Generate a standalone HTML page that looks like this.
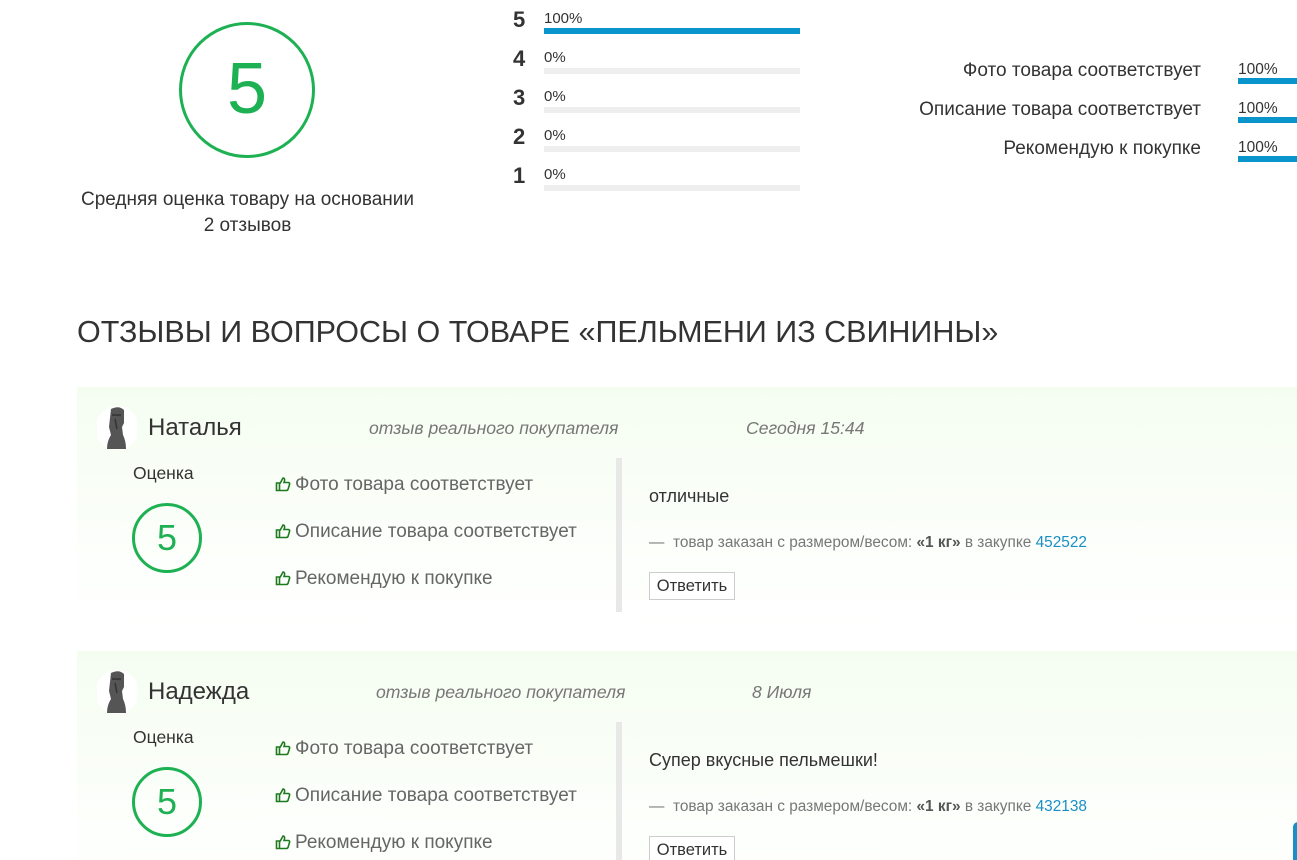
<!DOCTYPE html>
<html><head><meta charset="utf-8"><style>
*{margin:0;padding:0;box-sizing:border-box}
html,body{width:1297px;height:860px;overflow:hidden}
body{background:#fff;font-family:"Liberation Sans","DejaVu Sans",sans-serif;color:#333;position:relative}
.a{position:absolute;white-space:nowrap}
.circ{position:absolute;border:3px solid #1db153;border-radius:50%;color:#1db153;text-align:center}
.bar{position:absolute;left:544px;width:256px;height:6px;background:#eee}
.num{position:absolute;left:513px;font-weight:bold;font-size:22px;color:#333}
.pct{position:absolute;left:544px;font-size:15px;color:#333}
.lbl{position:absolute;right:96px;font-size:19px;color:#333;text-align:right}
.card{position:absolute;left:77px;width:1220px;height:240px;background:linear-gradient(#f5fdf1,#fdfffc 80%,#fff)}
.name{position:absolute;left:71px;font-size:24px;color:#333}
.it{position:absolute;font-style:italic;font-size:17.6px;color:#777}
.th{position:absolute;left:198px;font-size:19px;color:#666}
.th svg{vertical-align:-2px;margin-right:4px}
.sep{position:absolute;left:539px;top:71px;width:6px;height:154px;background:#e8e8e8}
.btn{position:absolute;left:572px;width:86px;height:28px;border:1px solid #ccc;background:#fff;font-size:16.5px;text-align:center;line-height:26px;color:#333}
.note{position:absolute;left:572px;font-size:15.4px;color:#777}
.note b{color:#555}
.note span{color:#1a8fc7}
</style></head><body>

<div class="circ" style="left:179px;top:22px;width:136px;height:136px;font-size:72px;line-height:128px">5</div>
<div class="a" style="left:0;width:495px;text-align:center;top:187px;font-size:19px;line-height:26px">Средняя оценка товару на основании<br>2 отзывов</div>

<div class="num" style="top:7px">5</div><div class="pct" style="top:10px">100%</div><div class="bar" style="top:28px;background:#0a94cc"></div>
<div class="num" style="top:46px">4</div><div class="pct" style="top:49px">0%</div><div class="bar" style="top:68px"></div>
<div class="num" style="top:85px">3</div><div class="pct" style="top:88px">0%</div><div class="bar" style="top:107px"></div>
<div class="num" style="top:124px">2</div><div class="pct" style="top:127px">0%</div><div class="bar" style="top:146px"></div>
<div class="num" style="top:163px">1</div><div class="pct" style="top:166px">0%</div><div class="bar" style="top:185px"></div>

<div class="lbl" style="top:60px">Фото товара соответствует</div>
<div class="lbl" style="top:99px">Описание товара соответствует</div>
<div class="lbl" style="top:138px">Рекомендую к покупке</div>
<div class="a" style="left:1238px;top:61px;font-size:15.5px">100%</div><div class="a" style="left:1238px;top:78px;width:59px;height:6px;background:#0a94cc"></div>
<div class="a" style="left:1238px;top:100px;font-size:15.5px">100%</div><div class="a" style="left:1238px;top:117px;width:59px;height:6px;background:#0a94cc"></div>
<div class="a" style="left:1238px;top:139px;font-size:15.5px">100%</div><div class="a" style="left:1238px;top:156px;width:59px;height:6px;background:#0a94cc"></div>

<div class="a" style="left:77px;top:315px;font-size:30.5px;color:#333">ОТЗЫВЫ И ВОПРОСЫ О ТОВАРЕ «ПЕЛЬМЕНИ ИЗ СВИНИНЫ»</div>

<!-- card 1 -->
<div class="card" style="top:387px">
  <svg class="a" style="left:20px;top:18px" width="40" height="46" viewBox="0 0 40 46"><circle cx="20" cy="23" r="22" fill="#fff"/><path d="M14 4 Q22 0 27 5 L27 18 L25 22 L26 30 Q29 36 29 44 L10 44 Q10 36 14 30 L12 22 Z" fill="#555"/><path d="M15 10 L24 10 M18 14 L20 24" stroke="#333" stroke-width="1.5"/></svg>
  <div class="name" style="top:27px">Наталья</div>
  <div class="it" style="left:292px;top:31px">отзыв реального покупателя</div>
  <div class="it" style="left:669px;top:31px">Сегодня 15:44</div>
  <div class="a" style="left:56px;top:76px;font-size:17.5px">Оценка</div>
  <div class="circ" style="left:55px;top:116px;width:70px;height:70px;font-size:36px;line-height:64px">5</div>
  <div class="th" style="top:87px"><svg width="16" height="16" viewBox="0 0 16 16"><path d="M1.5 7h3v7.5h-3z M5 7.5 L8 2 Q10 2 9.5 5 L9 6.5 H13.5 Q15 7 14.5 8.5 L13 13.5 Q12.5 14.5 11 14.5 H5" fill="none" stroke="#1f7a1f" stroke-width="1.6"/></svg>Фото товара соответствует</div>
  <div class="th" style="top:134px"><svg width="16" height="16" viewBox="0 0 16 16"><path d="M1.5 7h3v7.5h-3z M5 7.5 L8 2 Q10 2 9.5 5 L9 6.5 H13.5 Q15 7 14.5 8.5 L13 13.5 Q12.5 14.5 11 14.5 H5" fill="none" stroke="#1f7a1f" stroke-width="1.6"/></svg>Описание товара соответствует</div>
  <div class="th" style="top:181px"><svg width="16" height="16" viewBox="0 0 16 16"><path d="M1.5 7h3v7.5h-3z M5 7.5 L8 2 Q10 2 9.5 5 L9 6.5 H13.5 Q15 7 14.5 8.5 L13 13.5 Q12.5 14.5 11 14.5 H5" fill="none" stroke="#1f7a1f" stroke-width="1.6"/></svg>Рекомендую к покупке</div>
  <div class="sep"></div>
  <div class="a" style="left:572px;top:99px;font-size:18px">отличные</div>
  <div class="note" style="top:147px">—&nbsp; товар заказан с размером/весом: <b>«1 кг»</b> в закупке <span>452522</span></div>
  <div class="btn" style="top:185px">Ответить</div>
</div>

<!-- card 2 -->
<div class="card" style="top:651px">
  <svg class="a" style="left:20px;top:18px" width="40" height="46" viewBox="0 0 40 46"><circle cx="20" cy="23" r="22" fill="#fff"/><path d="M14 4 Q22 0 27 5 L27 18 L25 22 L26 30 Q29 36 29 44 L10 44 Q10 36 14 30 L12 22 Z" fill="#555"/><path d="M15 10 L24 10 M18 14 L20 24" stroke="#333" stroke-width="1.5"/></svg>
  <div class="name" style="top:27px">Надежда</div>
  <div class="it" style="left:299px;top:31px">отзыв реального покупателя</div>
  <div class="it" style="left:675px;top:31px">8 Июля</div>
  <div class="a" style="left:56px;top:76px;font-size:17.5px">Оценка</div>
  <div class="circ" style="left:55px;top:116px;width:70px;height:70px;font-size:36px;line-height:64px">5</div>
  <div class="th" style="top:87px"><svg width="16" height="16" viewBox="0 0 16 16"><path d="M1.5 7h3v7.5h-3z M5 7.5 L8 2 Q10 2 9.5 5 L9 6.5 H13.5 Q15 7 14.5 8.5 L13 13.5 Q12.5 14.5 11 14.5 H5" fill="none" stroke="#1f7a1f" stroke-width="1.6"/></svg>Фото товара соответствует</div>
  <div class="th" style="top:134px"><svg width="16" height="16" viewBox="0 0 16 16"><path d="M1.5 7h3v7.5h-3z M5 7.5 L8 2 Q10 2 9.5 5 L9 6.5 H13.5 Q15 7 14.5 8.5 L13 13.5 Q12.5 14.5 11 14.5 H5" fill="none" stroke="#1f7a1f" stroke-width="1.6"/></svg>Описание товара соответствует</div>
  <div class="th" style="top:181px"><svg width="16" height="16" viewBox="0 0 16 16"><path d="M1.5 7h3v7.5h-3z M5 7.5 L8 2 Q10 2 9.5 5 L9 6.5 H13.5 Q15 7 14.5 8.5 L13 13.5 Q12.5 14.5 11 14.5 H5" fill="none" stroke="#1f7a1f" stroke-width="1.6"/></svg>Рекомендую к покупке</div>
  <div class="sep"></div>
  <div class="a" style="left:572px;top:99px;font-size:18px">Супер вкусные пельмешки!</div>
  <div class="note" style="top:147px">—&nbsp; товар заказан с размером/весом: <b>«1 кг»</b> в закупке <span>432138</span></div>
  <div class="btn" style="top:185px">Ответить</div>
</div>

<div class="a" style="left:1293px;top:822px;width:10px;height:50px;background:#1a8fc7;border-radius:6px"></div>
</body></html>
